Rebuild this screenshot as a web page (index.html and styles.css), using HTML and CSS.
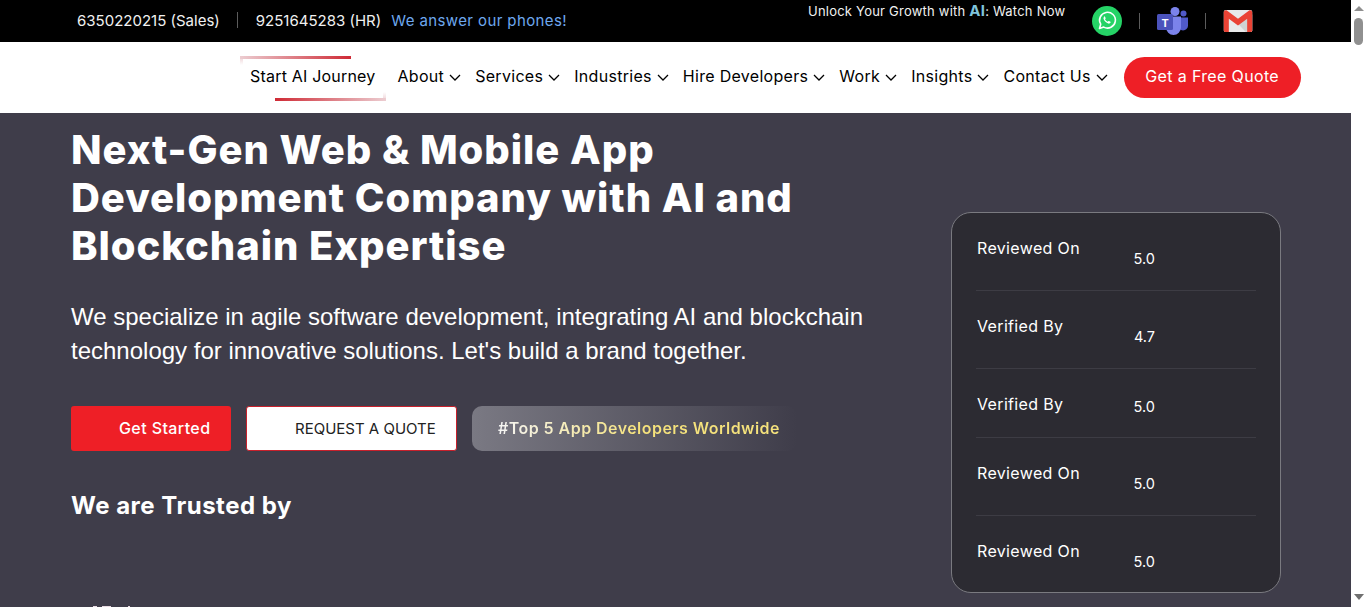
FILE: index.html
```html
<!DOCTYPE html>
<html lang="en">
<head>
    <meta charset="UTF-8">
    <meta name="viewport" content="width=device-width, initial-scale=1.0">
    <title>Web and Mobile App Development Company</title>
    <link rel="stylesheet" href="styles.css">
</head>
<body>
    <div class="topbar">
        <div class="topbar-phones">
            <span>6350220215 (Sales)</span>
            <span class="topbar-sep"></span>
            <span>9251645283 (HR)</span>
            <span class="topbar-note">We answer our phones!</span>
        </div>
        <div class="topbar-watch">Unlock Your Growth with <b>AI</b>: Watch Now</div>
        <div class="topbar-icons">
            <svg width="30" height="30" viewBox="0 0 30 30">
                <circle cx="15" cy="15" r="15" fill="#25d366"/>
                <path d="M7.5 22.500l1.200-4.300a7.900 7.900 0 1 1 3 2.900z" fill="none" stroke="#fff" stroke-width="1.600" stroke-linejoin="round"/>
                <path d="M12.200 10.800c-.6.5-.9 1.300-.6 2.300.6 2 2.700 4 4.700 4.500 1 .2 1.900-.2 2.300-1 .2-.4.100-.7-.2-.9l-1.400-.7c-.3-.1-.5 0-.7.200l-.5.600c-1.200-.4-2.200-1.300-2.800-2.500l.5-.6c.2-.2.2-.4.1-.7l-.6-1.300c-.2-.4-.5-.5-.8-.2z" fill="#fff"/>
            </svg>
            <span class="topbar-sep"></span>
            <svg width="31" height="28" viewBox="0 0 31 28">
                <circle cx="18" cy="4.500" r="4.500" fill="#7b83eb"/>
                <circle cx="26.500" cy="6.500" r="3" fill="#5059c9"/>
                <path d="M21 10.500h10v8a4.500 4.500 0 0 1-10 0z" fill="#5059c9"/>
                <path d="M9 9.500h15v11a7.500 7.500 0 0 1-15 0z" fill="#7b83eb"/>
                <rect x="0" y="7" width="16" height="16" rx="1.500" fill="#4b53bc"/>
                <text class="teams-t" x="8" y="19.500">T</text>
            </svg>
            <span class="topbar-sep"></span>
            <svg width="30" height="22" viewBox="0 0 31 24">
                <rect width="31" height="24" rx="2" fill="#e8eaea"/>
                <path d="M31 21.500V5L15.500 15 24 24h5a2 2 0 0 0 2-2z" fill="#cfd3d3"/>
                <path d="M0 2.500C0 .5 2 -.5 3.700 .7L15.500 9.500 27.300 .7C29 -.5 31 .5 31 2.500V22a2 2 0 0 1-2 2h-3.500V9.500l-10 7.500-10-7.500V24H2a2 2 0 0 1-2-2z" fill="#ea4335"/>
            </svg>
        </div>
    </div>

    <nav class="navbar">
        <a class="nav-journey" href="#"><span>Start AI Journey</span></a>
        <a class="nav-link" href="#"><span>About</span><svg class="chev" viewBox="0 0 12 7"><path d="M1 1l5 5 5-5"/></svg></a>
        <a class="nav-link" href="#"><span>Services</span><svg class="chev" viewBox="0 0 12 7"><path d="M1 1l5 5 5-5"/></svg></a>
        <a class="nav-link" href="#"><span>Industries</span><svg class="chev" viewBox="0 0 12 7"><path d="M1 1l5 5 5-5"/></svg></a>
        <a class="nav-link" href="#"><span>Hire Developers</span><svg class="chev" viewBox="0 0 12 7"><path d="M1 1l5 5 5-5"/></svg></a>
        <a class="nav-link" href="#"><span>Work</span><svg class="chev" viewBox="0 0 12 7"><path d="M1 1l5 5 5-5"/></svg></a>
        <a class="nav-link" href="#"><span>Insights</span><svg class="chev" viewBox="0 0 12 7"><path d="M1 1l5 5 5-5"/></svg></a>
        <a class="nav-link" href="#"><span>Contact Us</span><svg class="chev" viewBox="0 0 12 7"><path d="M1 1l5 5 5-5"/></svg></a>
        <a class="nav-quote" href="#">Get a Free Quote</a>
    </nav>

    <main class="hero">
        <section class="hero-left">
            <h1>Next-Gen Web &amp; Mobile App Development Company with AI and Blockchain Expertise</h1>
            <p class="hero-text">We specialize in agile software development, integrating AI and blockchain technology for innovative solutions. Let's build a brand together.</p>
            <div class="hero-actions">
                <a class="btn btn-red" href="#">Get Started</a>
                <a class="btn btn-white" href="#">REQUEST A QUOTE</a>
                <div class="btn-tag"><span>#Top 5 App Developers Worldwide</span></div>
            </div>
            <h2>We are Trusted by</h2>
            <div class="trusted-logos">
                <i class="logo-a"></i>
                <i class="logo-b"></i>
                <i class="logo-c"></i>
            </div>
        </section>
        <aside class="reviews">
            <div class="review-row"><span class="review-label">Reviewed On</span><span class="review-score">5.0</span></div>
            <div class="review-row"><span class="review-label">Verified By</span><span class="review-score">4.7</span></div>
            <div class="review-row row-short"><span class="review-label">Verified By</span><span class="review-score">5.0</span></div>
            <div class="review-row"><span class="review-label">Reviewed On</span><span class="review-score">5.0</span></div>
            <div class="review-row"><span class="review-label">Reviewed On</span><span class="review-score">5.0</span></div>
        </aside>
    </main>

    <div class="scrollbar">
        <i class="scroll-up"></i>
        <i class="scroll-thumb"></i>
        <i class="scroll-down"></i>
    </div>
</body>
</html>
```

FILE: styles.css
```css
* {
    margin: 0;
    padding: 0;
    box-sizing: border-box;
}
body {
    font-family: 'Inter', 'Liberation Sans', sans-serif;
    background: #3f3d4a;
    color: white;
    height: 607px;
    padding-right: 15px;
    overflow: hidden;
}
a {
    text-decoration: none;
}
.topbar {
    height: 42px;
    background: black;
    display: flex;
    align-items: flex-start;
    padding-left: 77px;
}
.topbar-phones {
    display: flex;
    align-items: center;
    height: 42px;
    padding-bottom: 2px;
    font-size: 15px;
    color: #f1f1f1;
}
.topbar-sep {
    width: 1px;
    height: 16px;
    background: #5c5c5c;
}
.topbar-phones .topbar-sep {
    margin: 0 18px 0 17px;
}
.topbar-note {
    color: #6ea8ee;
    margin-left: 10px;
    letter-spacing: .4px;
}
.topbar-watch {
    margin-left: 241px;
    margin-top: 3px;
    font-size: 13px;
    line-height: 16px;
    letter-spacing: .22px;
    color: #f1f1f1;
}
.topbar-watch b {
    color: #7fc4dc;
    font-size: 15px;
}
.topbar-icons {
    display: flex;
    align-items: center;
    height: 42px;
    margin-left: 27px;
}
.topbar-icons .topbar-sep {
    margin: 0 17px;
}
.teams-t {
    font-family: 'Liberation Sans', sans-serif;
    font-size: 11px;
    font-weight: bold;
    fill: white;
    text-anchor: middle;
}
.navbar {
    height: 71px;
    background: white;
    display: flex;
    align-items: center;
    padding-left: 250px;
    color: black;
}
.nav-journey {
    position: relative;
    font-size: 16px;
    letter-spacing: .2px;
    color: black;
    margin-right: 22px;
    padding-bottom: 3px;
}
.nav-journey::before,
.nav-journey::after {
    content: "";
    position: absolute;
    width: 111px;
    height: 9px;
}
.nav-journey::before {
    left: -10px;
    top: -10px;
    background: linear-gradient(90deg, #eccdd1, #cf2a35) top / 100% 3px no-repeat,
        linear-gradient(#eccdd1, #fff) left / 3px 100% no-repeat;
}
.nav-journey::after {
    left: 25px;
    bottom: -12px;
    background: linear-gradient(90deg, #cf2a35, #eccdd1) bottom / 100% 3px no-repeat,
        linear-gradient(#fff, #eccdd1) right / 3px 100% no-repeat;
}
.nav-link {
    display: flex;
    align-items: center;
    font-size: 16px;
    letter-spacing: .3px;
    color: black;
    margin-right: 14px;
}
.nav-link span {
    padding-bottom: 3px;
}
.chev {
    width: 12px;
    height: 7px;
    margin-left: 5px;
    fill: none;
    stroke: black;
    stroke-width: 1.3;
}
.nav-quote {
    width: 177px;
    height: 41px;
    margin-left: 2px;
    padding-bottom: 3px;
    border-radius: 21px;
    background: #ee1f26;
    color: white;
    font-size: 16px;
    letter-spacing: .35px;
    display: flex;
    align-items: center;
    justify-content: center;
}
.hero {
    display: flex;
    padding-left: 71px;
}
.hero-left {
    width: 880px;
    padding-top: 13px;
}
h1 {
    width: 780px;
    font-size: 40px;
    line-height: 48px;
    font-weight: 800;
    letter-spacing: .95px;
}
.hero-text {
    width: 800px;
    margin-top: 30px;
    font-family: 'Liberation Sans', sans-serif;
    font-size: 24px;
    line-height: 34px;
}
.hero-actions {
    display: flex;
    gap: 15px;
    margin-top: 38px;
}
.btn {
    height: 45px;
    border-radius: 3px;
    font-size: 15px;
    display: flex;
    align-items: center;
}
.btn-red {
    width: 160px;
    padding-left: 48px;
    padding-bottom: 1px;
    background: #ee1f26;
    color: white;
    font-size: 16px;
    font-weight: 500;
    letter-spacing: .4px;
}
.btn-white {
    width: 211px;
    padding-left: 48px;
    background: white;
    border: 1px solid #c7202b;
    color: #222;
}
.btn-tag {
    width: 325px;
    height: 45px;
    padding-left: 26px;
    padding-bottom: 1px;
    border-radius: 10px;
    background: linear-gradient(90deg, #7a7983, #3f3d4a);
    font-size: 16px;
    font-weight: 600;
    letter-spacing: .45px;
    display: flex;
    align-items: center;
}
.btn-tag span {
    background: linear-gradient(90deg, #f5f5f5, #f5e27c 50%);
    -webkit-background-clip: text;
    background-clip: text;
    color: transparent;
}
h2 {
    margin-top: 37px;
    font-size: 24px;
    line-height: 36px;
    font-weight: 700;
    letter-spacing: .5px;
}
.trusted-logos {
    display: flex;
    margin: 82px 0 0 22px;
}
.trusted-logos i {
    height: 4px;
    background: #e9dbe3;
}
.logo-a {
    width: 4px;
}
.logo-b {
    width: 9px;
    margin-left: 5px;
}
.logo-c {
    width: 2px;
    margin-left: 17px;
}
.reviews {
    width: 330px;
    height: 381px;
    margin-top: 99px;
    padding: 0 24px;
    background: #2c2b32;
    border: 1px solid #7a7a80;
    border-radius: 20px;
}
.review-row {
    height: 78px;
    display: flex;
    border-bottom: 1px solid #3d3c44;
}
.row-short {
    height: 69px;
}
.review-row:last-child {
    border-bottom: none;
}
.review-label {
    width: 157px;
    margin-top: 25px;
    padding-left: 1px;
    font-size: 16px;
    line-height: 20px;
    letter-spacing: .35px;
}
.review-score {
    width: 22px;
    margin-top: 36px;
    font-size: 14.5px;
    line-height: 20px;
    text-align: right;
}
.row-short .review-score {
    margin-top: 28px;
}
.scrollbar {
    position: fixed;
    top: 0;
    right: 0;
    width: 15px;
    height: 607px;
    background: white;
    display: flex;
    flex-direction: column;
    align-items: center;
    padding-top: 6px;
}
.scroll-up,
.scroll-down {
    width: 0;
    height: 0;
    border-left: 5px solid transparent;
    border-right: 5px solid transparent;
}
.scroll-up {
    border-bottom: 5px solid #8f8f8f;
}
.scroll-thumb {
    width: 9px;
    height: 27px;
    margin-top: 7px;
    border-radius: 5px;
    background: #909090;
}
.scroll-down {
    margin-top: 549px;
    border-top: 6px solid #707070;
}
```
